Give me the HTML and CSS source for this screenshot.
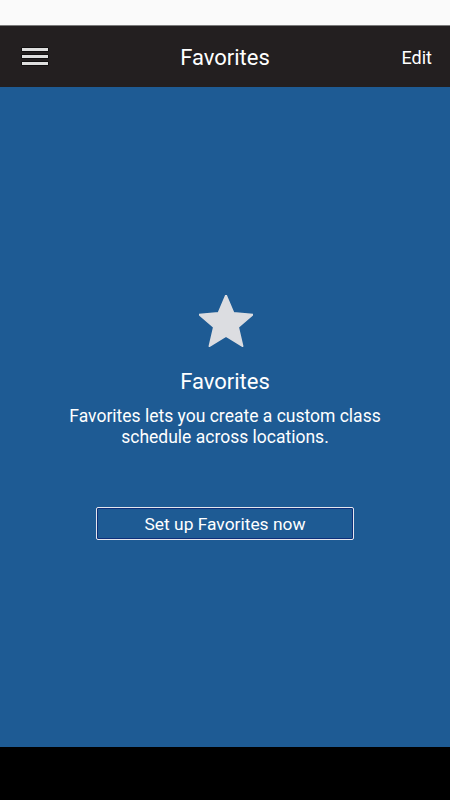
FILE: index.html
```html
<!DOCTYPE html>
<html>
<head>
<meta charset="utf-8">
<link rel="stylesheet" href="styles.css">
</head>
<body>
<div class="app">
  <div class="status"></div>
  <header class="bar">
    <div class="menu">
      <span></span><span></span><span></span>
    </div>
    <div class="title">Favorites</div>
    <div class="edit">Edit</div>
  </header>
  <main class="content">
    <svg class="star" viewBox="2 2 20 19.3" width="54" height="52">
      <path d="M12 17.27L18.18 21l-1.64-7.03L22 9.24l-7.19-.61L12 2 9.19 8.63 2 9.24l5.46 4.73L5.82 21z" fill="#dcdde1" stroke="#dcdde1" stroke-width="0.6" stroke-linejoin="round"/>
    </svg>
    <h1 class="heading">Favorites</h1>
    <p class="desc">Favorites lets you create a custom class<br>schedule across locations.</p>
    <button class="cta">Set up Favorites now</button>
  </main>
  <div class="navbar"></div>
</div>
</body>
</html>
```
FILE: styles.css
```css
* { box-sizing: border-box; margin: 0; padding: 0; }
html, body { width: 450px; height: 800px; overflow: hidden; }
body { font-family: Roboto, "Noto Sans", sans-serif; color: #fff; background: #000; }
.app { display: flex; flex-direction: column; height: 800px; }
.status { height: 26px; background: #fafafa; border-bottom: 1px solid #7a7a7a; flex: none; }
.bar { height: 61px; flex: none; background: #231f20; display: flex; align-items: center; justify-content: space-between; padding: 0 18px 0 22px; position: relative; }
.menu { width: 26px; display: flex; flex-direction: column; gap: 4px; margin-top: 0; }
.menu span { display: block; height: 3px; background: #dedede; box-shadow: 0 0 0 0.5px #000; }
.title { position: absolute; left: 0; right: 0; text-align: center; font-size: 22px; pointer-events: none; line-height: 28px; margin-top: 2px; }
.edit { font-size: 18px; line-height: 24px; margin-top: 2px; }
.content { flex: 1; background: #1e5b94; display: flex; flex-direction: column; align-items: center; padding-top: 208px; }
.star { display: block; margin-left: 1px; }
.heading { font-weight: 400; font-size: 22px; line-height: 26px; margin-top: 22px; }
.desc { font-size: 17.5px; line-height: 21px; text-align: center; margin-top: 11px; }
.cta { margin-top: 59px; width: 258px; height: 33px; background: transparent; border: 1px solid #e6e6ee; border-radius: 2px; color: #fff; font-family: inherit; font-size: 17.4px; box-shadow: inset 0 0 0 1px #0d2f7a; }
.navbar { height: 53px; flex: none; background: #000; }
```
